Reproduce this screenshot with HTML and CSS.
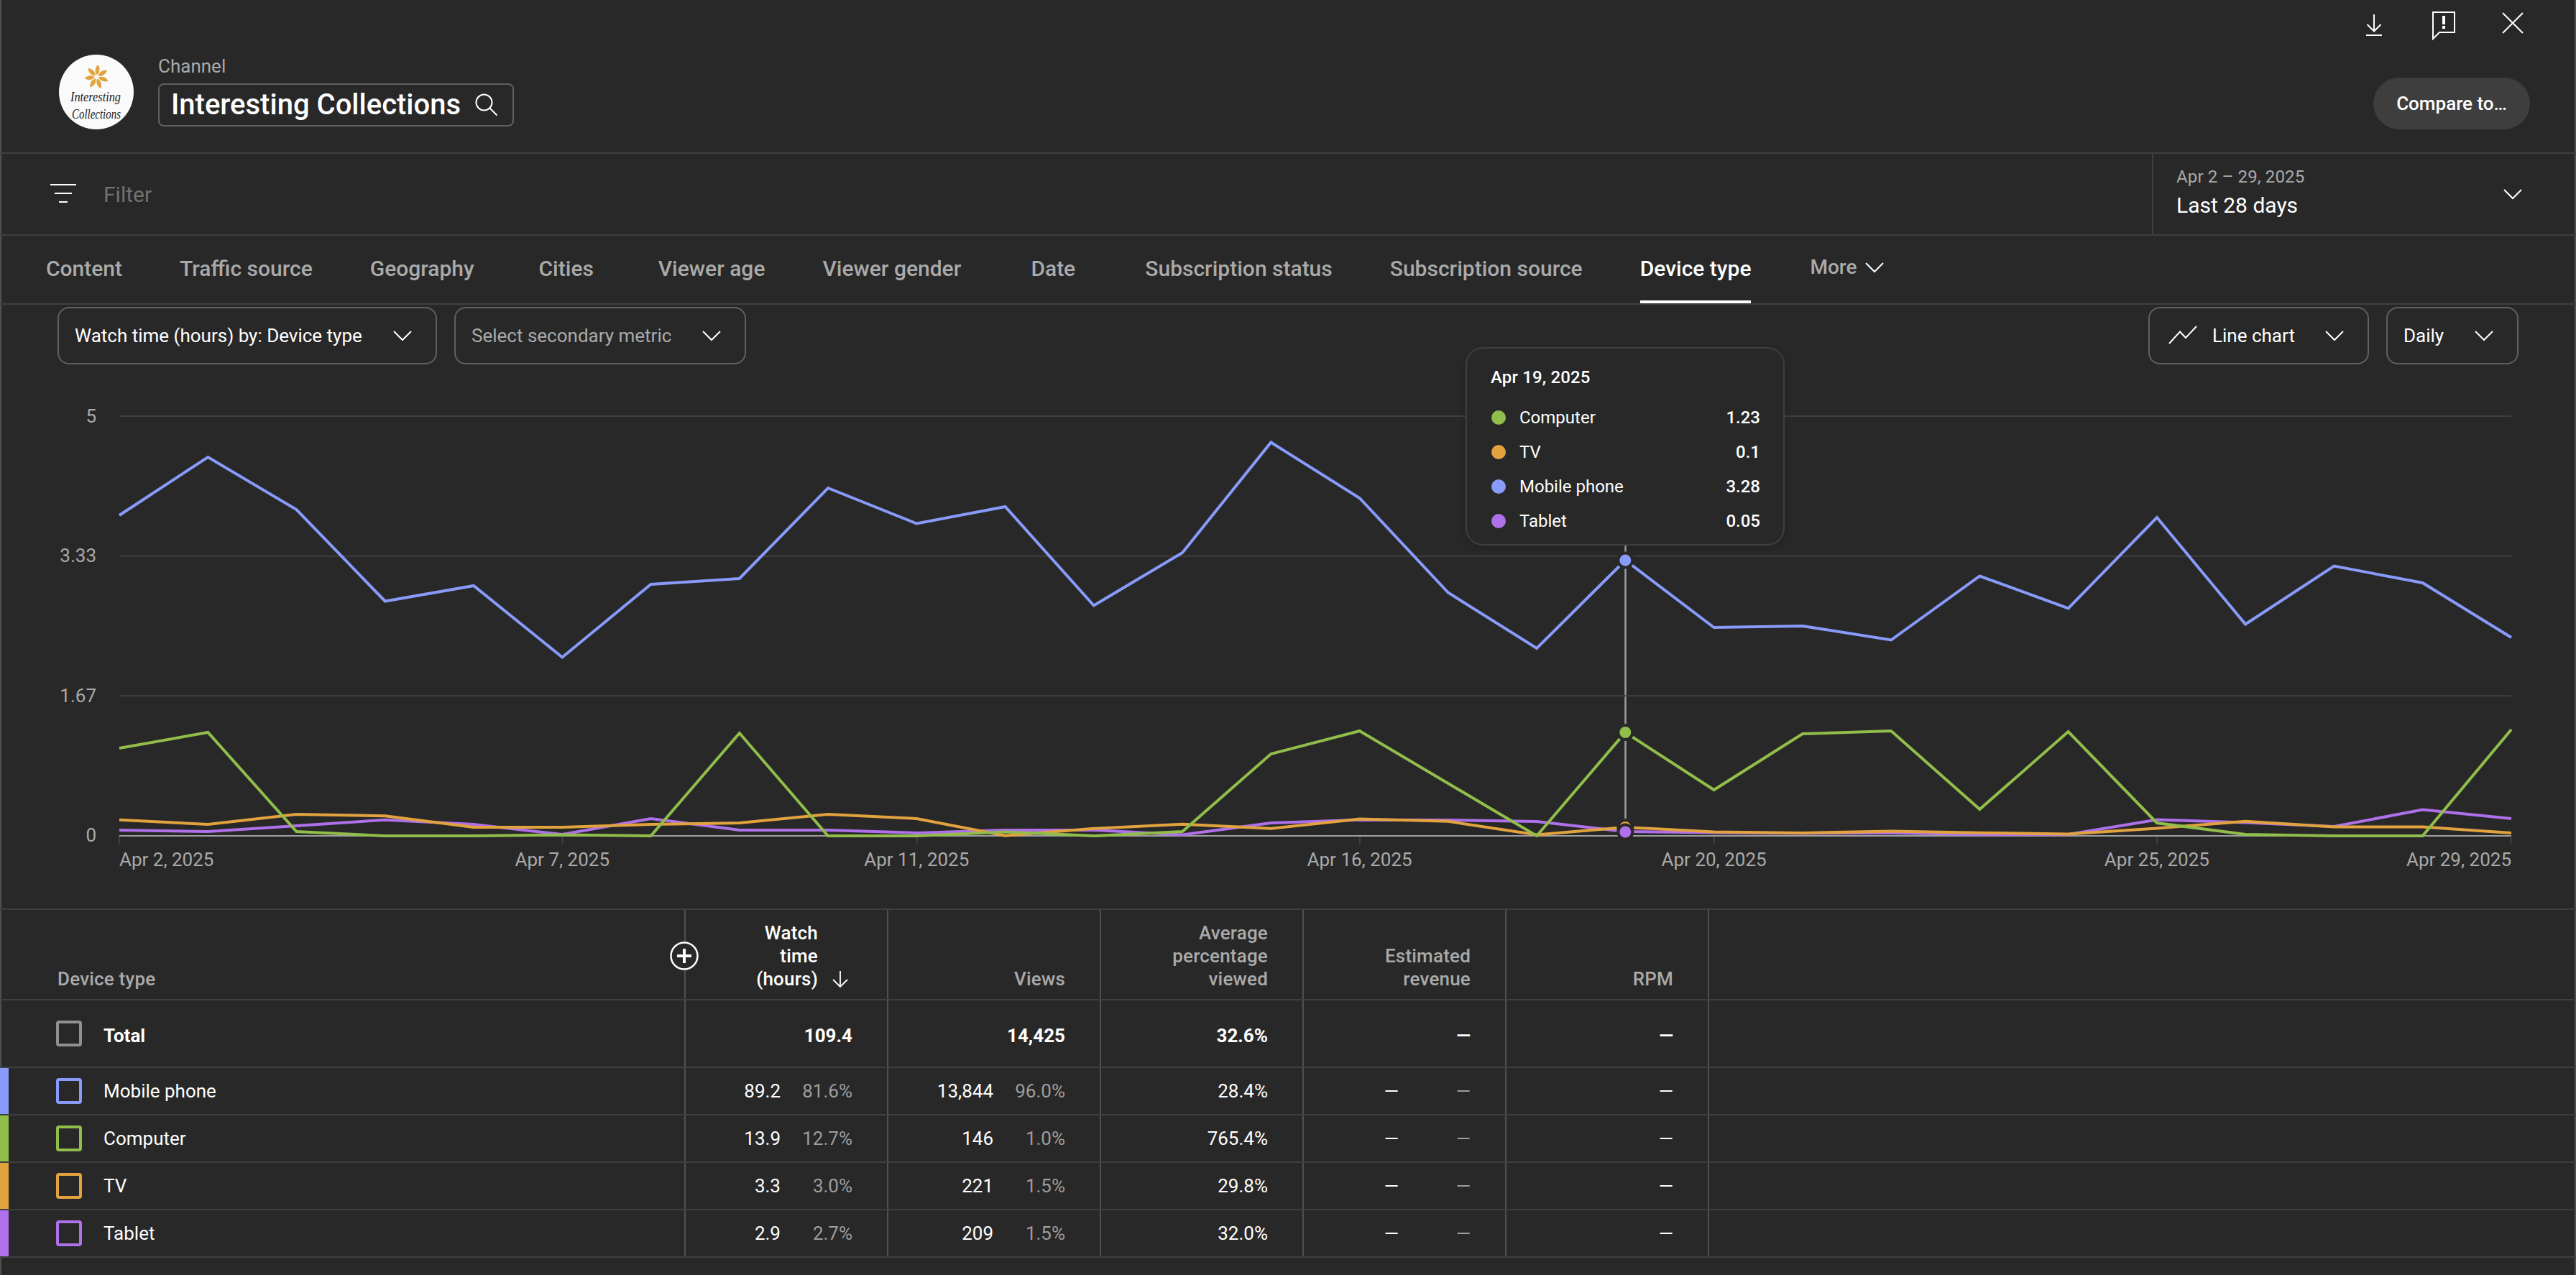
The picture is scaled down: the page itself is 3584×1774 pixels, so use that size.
FILE: index.html
```html
<!DOCTYPE html>
<html lang="en">
<head>
    <meta charset="UTF-8">
    <meta name="viewport" content="width=device-width, initial-scale=1.0">
    <title>Interesting Collections - Analytics</title>
    <link rel="stylesheet" href="styles.css">
</head>
<body>
    <div class="panel">
        <header class="header">
            <svg class="avatar" viewBox="0 0 104 104">
                <defs>
                    <path id="petal" d="M0.500 -2.500C-3.500 -7 -2.500 -13 2 -17C5 -12 4.500 -6 0.500 -2.500Z"/>
                </defs>
                <circle cx="52" cy="52" r="52" fill="#fafafa"/>
                <g transform="translate(52.500 31)" fill="#e2a33f">
                    <use href="#petal"/>
                    <use href="#petal" transform="rotate(51.430)"/>
                    <use href="#petal" transform="rotate(102.860)"/>
                    <use href="#petal" transform="rotate(154.290)"/>
                    <use href="#petal" transform="rotate(205.710)"/>
                    <use href="#petal" transform="rotate(257.140)"/>
                    <use href="#petal" transform="rotate(308.570)"/>
                </g>
                <text class="avatar-text" x="16" y="65" textLength="70" lengthAdjust="spacingAndGlyphs">Interesting</text>
                <text class="avatar-text" x="18" y="89" textLength="68" lengthAdjust="spacingAndGlyphs">Collections</text>
            </svg>
            <div class="channel">
                <div class="channel-label">Channel</div>
                <div class="channel-box">
                    <h1>Interesting Collections</h1>
                    <svg class="icon-search" viewBox="0 0 32 32"><circle cx="12.500" cy="12.500" r="11"/><path d="M20.500 20.500L30.500 30.500"/></svg>
                </div>
            </div>
            <div class="header-right">
                <div class="toolbar">
                    <svg class="icon" viewBox="0 0 48 48"><path d="M23 12V35M13.500 26L23 35.500L32.500 26M12 41H34"/></svg>
                    <svg class="icon" viewBox="0 0 48 48"><path d="M9 9H39V37H18L9 46Z"/><path class="solid" d="M22 14h4v12h-4zM22 28h4v4h-4z"/></svg>
                    <svg class="icon" viewBox="0 0 48 48"><path d="M10 10L38 38M38 10L10 38"/></svg>
                </div>
                <button class="compare">Compare to…</button>
            </div>
        </header>

        <div class="filter-bar">
            <div class="filter">
                <svg class="icon" viewBox="0 0 48 48"><path d="M6 11H42M12 23H36M18 35H30"/></svg>
                <span>Filter</span>
            </div>
            <div class="date-picker">
                <div>
                    <div class="date-range">Apr 2 – 29, 2025</div>
                    <div class="date-preset">Last 28 days</div>
                </div>
                <svg class="icon" viewBox="0 0 48 48"><path d="M12 18L24 30L36 18"/></svg>
            </div>
        </div>

        <nav class="tabs">
            <a class="tab">Content</a>
            <a class="tab">Traffic source</a>
            <a class="tab">Geography</a>
            <a class="tab">Cities</a>
            <a class="tab">Viewer age</a>
            <a class="tab">Viewer gender</a>
            <a class="tab">Date</a>
            <a class="tab">Subscription status</a>
            <a class="tab">Subscription source</a>
            <a class="tab active"><span>Device type</span></a>
            <a class="more">More <svg class="icon" viewBox="0 0 48 48"><path d="M12 18L24 30L36 18"/></svg></a>
        </nav>

        <div class="controls">
            <div class="select select-metric">Watch time (hours) by: Device type <svg class="icon" viewBox="0 0 48 48"><path d="M12 18L24 30L36 18"/></svg></div>
            <div class="select select-secondary">Select secondary metric <svg class="icon" viewBox="0 0 48 48"><path d="M12 18L24 30L36 18"/></svg></div>
            <div class="select select-chart">
                <svg class="icon" viewBox="0 0 48 48"><path d="M5 35L20 18.500L28 27L43 11"/></svg>
                <span>Line chart</span>
                <svg class="icon" viewBox="0 0 48 48"><path d="M12 18L24 30L36 18"/></svg>
            </div>
            <div class="select select-period">Daily <svg class="icon" viewBox="0 0 48 48"><path d="M12 18L24 30L36 18"/></svg></div>
        </div>

        <div class="chart">
            <svg viewBox="0 507 3584 757">
                <path class="hover-line" d="M2261.500 700V1163"/>
                <path class="grid" d="M166 579H3494M166 773.700H3494M166 968.300H3494"/>
                <path class="axis" d="M166 1163H3494"/>
                <path class="tick" d="M166 1164V1175M782.500 1164V1175M1275.500 1164V1175M1892 1164V1175M2385 1164V1175M3001 1164V1175M3493.500 1164V1175"/>

                <polyline class="line tablet" points="166,1155 289.300,1157 412.500,1149 535.800,1140.700 659,1147 782.300,1161 905.500,1139 1028.800,1155 1152,1155 1275.300,1158.900 1398.600,1155 1521.800,1155 1645.100,1161.500 1768.300,1145 1891.600,1140.700 2014.800,1141 2138.100,1143 2261.300,1157 2384.600,1158.500 2507.900,1159.500 2631.100,1159 2754.400,1161 2877.600,1161 3000.900,1140.500 3124.100,1144.500 3247.400,1150 3370.600,1126.600 3494,1139"/>
                <polyline class="line tv" points="166,1140.700 289.300,1147 412.500,1133 535.800,1135.300 659,1151 782.300,1151 905.500,1147 1028.800,1145 1152,1133 1275.300,1139 1398.600,1162.800 1521.800,1152.800 1645.100,1146.700 1768.300,1152.800 1891.600,1139.400 2014.800,1142.800 2138.100,1161.500 2261.300,1151 2384.600,1157.600 2507.900,1159 2631.100,1156.600 2754.400,1158.700 2877.600,1160.500 3000.900,1152.500 3124.100,1142.700 3247.400,1150.500 3370.600,1150.500 3494,1159"/>
                <polyline class="line computer" points="166,1041 289.300,1019 412.500,1157 535.800,1163 659,1163 782.300,1161.500 905.500,1163 1028.800,1020 1152,1163 1275.300,1163 1398.600,1157.500 1521.800,1163 1645.100,1157 1768.300,1049 1891.600,1017 2014.800,1090 2138.100,1163 2261.300,1019 2384.600,1099 2507.900,1021 2631.100,1017 2754.400,1126 2877.600,1018 3000.900,1145 3124.100,1161 3247.400,1163 3370.600,1163 3494,1015"/>
                <polyline class="line mobile" points="166,717 289.300,636 412.500,709 535.800,836.500 659,815 782.300,914.500 905.500,813 1028.800,805 1152,679 1275.300,728.500 1398.600,705 1521.800,842.500 1645.100,769 1768.300,615.500 1891.600,693 2014.800,824.500 2138.100,902 2261.300,779.500 2384.600,873 2507.900,871 2631.100,890.500 2754.400,801.500 2877.600,846.500 3000.900,720 3124.100,868.500 3247.400,787.500 3370.600,811 3494,887"/>

                <circle class="dot mobile-dot" cx="2261.300" cy="779.500" r="10"/>
                <circle class="dot computer-dot" cx="2261.300" cy="1019" r="10"/>
                <circle class="dot tv-dot" cx="2261.300" cy="1151" r="10"/>
                <circle class="dot tablet-dot" cx="2261.300" cy="1157.500" r="10"/>

                <g class="label" text-anchor="end">
                    <text x="134" y="588">5</text>
                    <text x="134" y="782">3.33</text>
                    <text x="134" y="977">1.67</text>
                    <text x="134" y="1171">0</text>
                </g>
                <g class="label" text-anchor="middle">
                    <text x="166" y="1205" text-anchor="start">Apr 2, 2025</text>
                    <text x="782.300" y="1205">Apr 7, 2025</text>
                    <text x="1275.300" y="1205">Apr 11, 2025</text>
                    <text x="1891.600" y="1205">Apr 16, 2025</text>
                    <text x="2384.600" y="1205">Apr 20, 2025</text>
                    <text x="3000.900" y="1205">Apr 25, 2025</text>
                    <text x="3494" y="1205" text-anchor="end">Apr 29, 2025</text>
                </g>
            </svg>

            <div class="tooltip">
                <div class="tooltip-title">Apr 19, 2025</div>
                <div class="tooltip-row"><i class="bg-computer"></i>Computer<b>1.23</b></div>
                <div class="tooltip-row"><i class="bg-tv"></i>TV<b>0.1</b></div>
                <div class="tooltip-row"><i class="bg-mobile"></i>Mobile phone<b>3.28</b></div>
                <div class="tooltip-row"><i class="bg-tablet"></i>Tablet<b>0.05</b></div>
            </div>
        </div>

        <div class="table">
            <div class="row head">
                <div class="cell name">Device type
                    <svg class="add" viewBox="0 0 40 40"><circle cx="20" cy="20" r="18.500"/><path d="M20 10V30M10 20H30"/></svg>
                </div>
                <div class="cell sorted">Watch<br>time<br>(hours)
                    <svg class="sort" viewBox="0 0 24 24"><path d="M12 1V23M2 13L12 23L22 13"/></svg>
                </div>
                <div class="cell">Views</div>
                <div class="cell">Average<br>percentage<br>viewed</div>
                <div class="cell">Estimated<br>revenue</div>
                <div class="cell">RPM</div>
            </div>
            <div class="row total">
                <div class="cell name"><i class="check"></i><span>Total</span></div>
                <div class="cell">109.4</div>
                <div class="cell">14,425</div>
                <div class="cell">32.6%</div>
                <div class="cell">—</div>
                <div class="cell">—</div>
            </div>
            <div class="row">
                <div class="cell name mark-mobile"><i class="check"></i>Mobile phone</div>
                <div class="cell">89.2<span class="pct">81.6%</span></div>
                <div class="cell">13,844<span class="pct">96.0%</span></div>
                <div class="cell">28.4%</div>
                <div class="cell">—<span class="pct">—</span></div>
                <div class="cell">—</div>
            </div>
            <div class="row">
                <div class="cell name mark-computer"><i class="check"></i>Computer</div>
                <div class="cell">13.9<span class="pct">12.7%</span></div>
                <div class="cell">146<span class="pct">1.0%</span></div>
                <div class="cell">765.4%</div>
                <div class="cell">—<span class="pct">—</span></div>
                <div class="cell">—</div>
            </div>
            <div class="row">
                <div class="cell name mark-tv"><i class="check"></i>TV</div>
                <div class="cell">3.3<span class="pct">3.0%</span></div>
                <div class="cell">221<span class="pct">1.5%</span></div>
                <div class="cell">29.8%</div>
                <div class="cell">—<span class="pct">—</span></div>
                <div class="cell">—</div>
            </div>
            <div class="row">
                <div class="cell name mark-tablet"><i class="check"></i>Tablet</div>
                <div class="cell">2.9<span class="pct">2.7%</span></div>
                <div class="cell">209<span class="pct">1.5%</span></div>
                <div class="cell">32.0%</div>
                <div class="cell">—<span class="pct">—</span></div>
                <div class="cell">—</div>
            </div>
        </div>
    </div>
</body>
</html>
```

FILE: styles.css
```css
* {
    margin: 0;
    padding: 0;
    box-sizing: border-box;
}

:root {
    --bg: #282828;
    --border: #3f3f3f;
    --outline: #606060;
    --muted: #aaaaaa;
    --mobile: #889bfa;
    --computer: #91bd4b;
    --tv: #e2a33f;
    --tablet: #af71ea;
}

body {
    font-family: Roboto, "Liberation Sans", sans-serif;
    font-size: 26px;
    color: #fff;
    background: var(--bg);
}

.panel {
    height: 1774px;
    overflow: hidden;
    box-shadow: inset 2px 0 #505050, inset -2px 0 #505050;
}

svg {
    display: block;
    flex: none;
}

.icon {
    width: 48px;
    height: 48px;
    fill: none;
    stroke: #fff;
    stroke-width: 2;
}

.icon .solid {
    fill: #fff;
    stroke: none;
}

/* header */
.header {
    display: flex;
    height: 214px;
    padding: 8px 64px 0 82px;
    border-bottom: 2px solid var(--border);
}

.avatar {
    width: 104px;
    height: 104px;
    margin-top: 68px;
    overflow: visible;
}

.avatar-text {
    font: italic 19px "Liberation Serif", serif;
    fill: #222;
}

.channel {
    margin: 68px 0 0 34px;
}

.channel-label {
    height: 40px;
    line-height: 32px;
    color: var(--muted);
}

.channel-box {
    display: flex;
    align-items: center;
    justify-content: space-between;
    width: 495px;
    height: 60px;
    padding: 0 20px 0 16px;
    border: 2px solid var(--outline);
    border-radius: 8px;
}

.channel-box h1 {
    padding-bottom: 2px;
    font-size: 40px;
    font-weight: 500;
}

.icon-search {
    width: 32px;
    height: 32px;
    fill: none;
    stroke: #fff;
    stroke-width: 2;
}

.header-right {
    display: flex;
    flex-direction: column;
    align-items: flex-end;
    gap: 52px;
    margin-left: auto;
}

.toolbar {
    display: flex;
    gap: 48px;
}

.compare {
    height: 72px;
    padding: 0 32px;
    font: 500 26px Roboto, sans-serif;
    color: #fff;
    background: #3e3e3e;
    border: none;
    border-radius: 36px;
}

/* filter bar */
.filter-bar {
    display: flex;
    height: 114px;
    border-bottom: 2px solid var(--border);
}

.filter {
    display: flex;
    flex: 1;
    align-items: center;
    gap: 32px;
    padding-left: 64px;
    font-size: 30px;
    color: #717171;
}

.date-picker {
    display: flex;
    align-items: center;
    justify-content: space-between;
    width: 590px;
    padding: 0 64px 0 32px;
    border-left: 2px solid var(--border);
}

.date-range {
    font-size: 24px;
    line-height: 32px;
    letter-spacing: 0.15px;
    color: var(--muted);
}

.date-preset {
    font-size: 30px;
    line-height: 48px;
}

/* tabs */
.tabs {
    display: flex;
    height: 96px;
    padding-left: 24px;
    border-bottom: 2px solid var(--border);
    font-weight: 500;
    color: var(--muted);
}

.tab {
    min-width: 176px;
    padding: 0 40px;
    font-size: 30px;
    line-height: 91px;
    text-align: center;
}

.tab.active {
    color: #fff;
}

.tab.active span {
    display: block;
    height: 94px;
    border-bottom: 4px solid #fff;
}

.more {
    display: flex;
    align-items: center;
    height: 87px;
    margin-left: 42px;
    font-size: 28px;
}

/* chart controls */
.controls {
    display: flex;
    gap: 24px;
    margin-top: 3px;
    padding: 0 80px;
}

.select {
    display: flex;
    align-items: center;
    justify-content: space-between;
    height: 80px;
    padding: 0 22px;
    border: 2px solid var(--outline);
    border-radius: 16px;
}

.select-metric {
    width: 528px;
}

.select-secondary {
    width: 406px;
    color: var(--muted);
}

.select-chart {
    width: 307px;
    margin-left: auto;
}

.select-chart span {
    margin-right: 14px;
}

.select-period {
    width: 184px;
}

/* chart */
.chart {
    position: relative;
    height: 757px;
}

.grid {
    stroke: var(--border);
    stroke-width: 2;
}

.axis {
    stroke: #9e9e9e;
    stroke-width: 2;
}

.tick {
    stroke: var(--border);
    stroke-width: 2;
}

.hover-line {
    stroke: #9e9e9e;
    stroke-width: 2.5;
}

.line {
    fill: none;
    stroke-width: 4;
}

.mobile { stroke: var(--mobile); }
.computer { stroke: var(--computer); }
.tv { stroke: var(--tv); }
.tablet { stroke: var(--tablet); }

.dot {
    stroke: var(--bg);
    stroke-width: 4;
}

.mobile-dot { fill: var(--mobile); }
.computer-dot { fill: var(--computer); }
.tv-dot { fill: var(--tv); }
.tablet-dot { fill: var(--tablet); }

.label {
    fill: var(--muted);
    font-size: 26px;
}

.tooltip {
    position: absolute;
    top: -24px;
    left: 2039px;
    width: 444px;
    height: 276px;
    padding: 16px 32px 16px 33px;
    font-size: 24px;
    background: var(--bg);
    border: 2px solid var(--border);
    border-radius: 24px;
    box-shadow: 0 4px 10px rgba(0, 0, 0, 0.12);
}

.tooltip-title {
    height: 56px;
    line-height: 48px;
    letter-spacing: 0.15px;
    font-weight: 500;
}

.tooltip-row {
    display: flex;
    align-items: center;
    height: 48px;
}

.tooltip-row i {
    width: 20px;
    height: 20px;
    margin: 0 19px 0 1px;
    border-radius: 50%;
}

.tooltip-row b {
    margin-left: auto;
    font-weight: 500;
}

.bg-mobile { background: var(--mobile); }
.bg-computer { background: var(--computer); }
.bg-tv { background: var(--tv); }
.bg-tablet { background: var(--tablet); }

/* table */
.table {
    border-top: 2px solid var(--border);
}

.row {
    display: grid;
    grid-template-columns: 954px 282px 296px 282px 282px 282px;
    height: 66px;
    border-bottom: 2px solid var(--border);
}

.cell {
    display: flex;
    align-items: center;
    justify-content: flex-end;
    padding-right: 48px;
    border-right: 2px solid #505050;
}

.cell.name {
    position: relative;
    justify-content: flex-start;
    padding-left: 78px;
}

.pct {
    width: 100px;
    text-align: right;
    color: #9e9e9e;
}

.head {
    height: 126px;
    font-weight: 500;
    line-height: 32px;
    letter-spacing: 0.2px;
    color: var(--muted);
}

.head .cell {
    display: block;
    align-self: stretch;
    align-content: end;
    padding-bottom: 12px;
    text-align: right;
}

.head .name {
    padding-left: 80px;
    text-align: left;
}

.head .sorted {
    position: relative;
    padding-right: 96px;
    color: #fff;
}

.sort {
    position: absolute;
    right: 53px;
    bottom: 16px;
    width: 24px;
    height: 24px;
    fill: none;
    stroke: #fff;
    stroke-width: 1.8;
}

.add {
    position: absolute;
    top: 44px;
    right: -20px;
    z-index: 1;
    width: 40px;
    height: 40px;
    fill: var(--bg);
    stroke: #fff;
    stroke-width: 2.5;
}

.add path {
    stroke-width: 4;
}

.total {
    height: 94px;
    font-weight: 700;
}

.total .cell {
    padding-top: 5px;
}

.total .name {
    padding-top: 0;
}

.total .name span {
    padding-top: 5px;
}

.check {
    width: 36px;
    height: 36px;
    margin-right: 30px;
    border: 4px solid #909090;
    border-radius: 4px;
}

/* colored strip at the left edge of each series row */
.mark-mobile { box-shadow: inset 12px 0 var(--mobile); }
.mark-computer { box-shadow: inset 12px 0 var(--computer); }
.mark-tv { box-shadow: inset 12px 0 var(--tv); }
.mark-tablet { box-shadow: inset 12px 0 var(--tablet); }

.mark-mobile .check { border-color: var(--mobile); }
.mark-computer .check { border-color: var(--computer); }
.mark-tv .check { border-color: var(--tv); }
.mark-tablet .check { border-color: var(--tablet); }
```
